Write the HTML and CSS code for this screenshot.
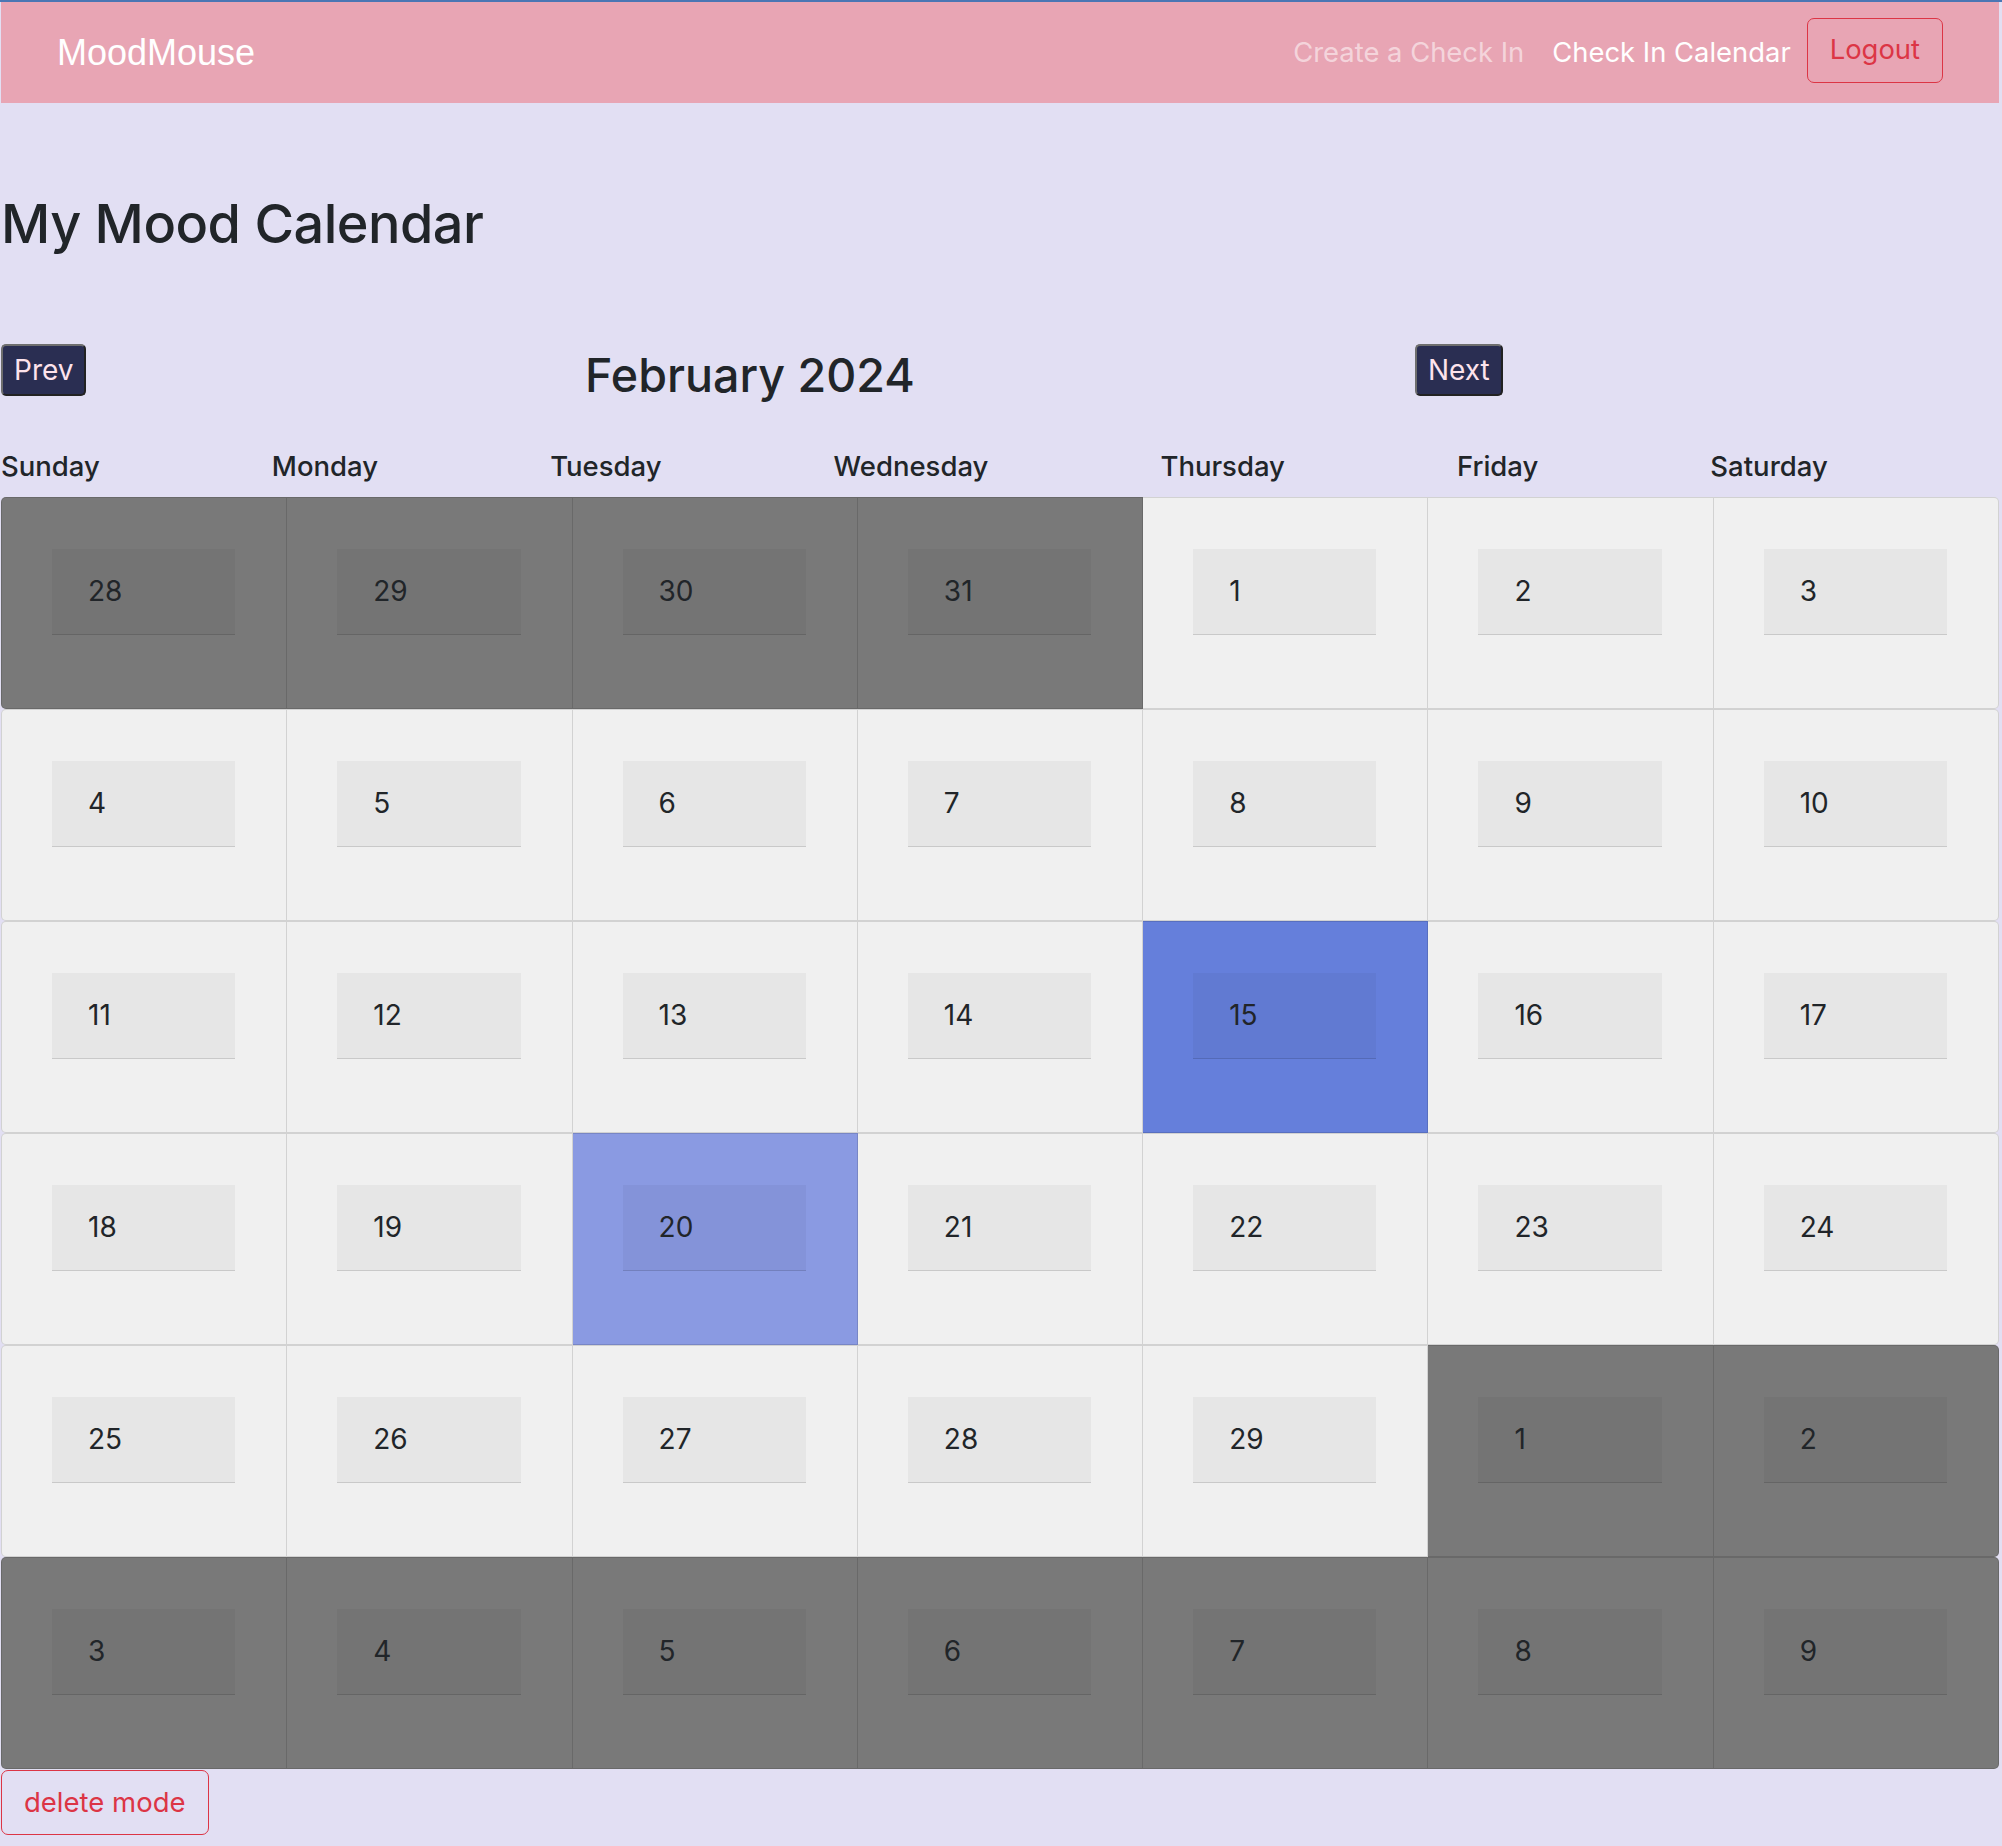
FILE: index.html
```html
<!DOCTYPE html>
<html lang="en">
<head>
<meta charset="utf-8">
<title>MoodMouse</title>
<link rel="stylesheet" href="styles.css">
</head>
<body>
<nav class="navbar">
  <a class="brand" href="#">MoodMouse</a>
  <div class="nav-right">
    <a class="nav-link" href="#">Create a Check In</a>
    <a class="nav-link active" href="#">Check In Calendar</a>
    <button class="btn-logout">Logout</button>
  </div>
</nav>
<main class="page">
  <h1 class="title">My Mood Calendar</h1>
  <div class="month-bar">
    <div class="col-prev"><button class="nav-btn">Prev</button></div>
    <h2 class="month">February 2024</h2>
    <div class="col-next"><button class="nav-btn">Next</button></div>
  </div>
  <div class="weekdays">
    <span>Sunday</span><span>Monday</span><span>Tuesday</span><span>Wednesday</span><span>Thursday</span><span>Friday</span><span>Saturday</span>
  </div>
  <div class="calendar">
    <div class="week">
      <div class="cell out"><div class="day">28</div></div>
      <div class="cell out"><div class="day">29</div></div>
      <div class="cell out"><div class="day">30</div></div>
      <div class="cell out"><div class="day">31</div></div>
      <div class="cell"><div class="day">1</div></div>
      <div class="cell"><div class="day">2</div></div>
      <div class="cell"><div class="day">3</div></div>
    </div>
    <div class="week">
      <div class="cell"><div class="day">4</div></div>
      <div class="cell"><div class="day">5</div></div>
      <div class="cell"><div class="day">6</div></div>
      <div class="cell"><div class="day">7</div></div>
      <div class="cell"><div class="day">8</div></div>
      <div class="cell"><div class="day">9</div></div>
      <div class="cell"><div class="day">10</div></div>
    </div>
    <div class="week">
      <div class="cell"><div class="day">11</div></div>
      <div class="cell"><div class="day">12</div></div>
      <div class="cell"><div class="day">13</div></div>
      <div class="cell"><div class="day">14</div></div>
      <div class="cell mood-strong"><div class="day">15</div></div>
      <div class="cell"><div class="day">16</div></div>
      <div class="cell"><div class="day">17</div></div>
    </div>
    <div class="week">
      <div class="cell"><div class="day">18</div></div>
      <div class="cell"><div class="day">19</div></div>
      <div class="cell mood-soft"><div class="day">20</div></div>
      <div class="cell"><div class="day">21</div></div>
      <div class="cell"><div class="day">22</div></div>
      <div class="cell"><div class="day">23</div></div>
      <div class="cell"><div class="day">24</div></div>
    </div>
    <div class="week">
      <div class="cell"><div class="day">25</div></div>
      <div class="cell"><div class="day">26</div></div>
      <div class="cell"><div class="day">27</div></div>
      <div class="cell"><div class="day">28</div></div>
      <div class="cell"><div class="day">29</div></div>
      <div class="cell out"><div class="day">1</div></div>
      <div class="cell out"><div class="day">2</div></div>
    </div>
    <div class="week">
      <div class="cell out"><div class="day">3</div></div>
      <div class="cell out"><div class="day">4</div></div>
      <div class="cell out"><div class="day">5</div></div>
      <div class="cell out"><div class="day">6</div></div>
      <div class="cell out"><div class="day">7</div></div>
      <div class="cell out"><div class="day">8</div></div>
      <div class="cell out"><div class="day">9</div></div>
    </div>
  </div>
  <button class="btn-delete">delete mode</button>
</main>
</body>
</html>
```
FILE: styles.css
```css
html, body {
  margin: 0;
  padding: 0;
}
body {
  background: #e2dff3;
  border-top: 2px solid #4a76b4;
  padding: 0 3px 0 1px;
  font-family: Inter, "Noto Sans", sans-serif;
  color: #212529;
  font-size: 28px;
  line-height: 1.5;
  min-height: 1844px;
  box-sizing: border-box;
}
.navbar {
  display: flex;
  align-items: center;
  justify-content: space-between;
  background: #e8a5b4;
  height: 101px;
  padding: 0 56px;
}
.brand {
  font-family: "Liberation Sans", Arial, sans-serif;
  font-size: 36px;
  color: #ffffff;
  text-decoration: none;
  line-height: 1.5;
}
.nav-right {
  display: flex;
  align-items: center;
}
.nav-link {
  color: rgba(255, 255, 255, 0.55);
  text-decoration: none;
  padding: 0 14px;
  font-size: 27.4px;
}
.nav-link.active {
  color: #ffffff;
}
.btn-logout {
  margin: -5px 0 0 2px;
  font-family: Inter, sans-serif;
  font-size: 27.4px;
  line-height: 1.5;
  color: #dc3545;
  background: transparent;
  border: 1px solid #dc3545;
  border-radius: 7px;
  padding: 10px 22px;
  height: 65px;
}
.page {
  display: flex;
  flex-direction: column;
  align-items: stretch;
}
.title {
  margin: 84px 0 0;
  font-size: 54px;
  font-weight: 500;
  line-height: 1.2;
  letter-spacing: -0.5px;
  padding-top: 5px;
  height: 67px;
}
.month-bar {
  display: grid;
  grid-template-columns: 584px 830px 1fr;
  margin-top: 85px;
  height: 100px;
}
.nav-btn {
  font-family: Inter, sans-serif;
  font-size: 28px;
  line-height: 1.5;
  color: #fde3ec;
  background: #2a2e52;
  border: 2px solid;
  border-color: #6e6e6e #222222 #222222 #6e6e6e;
  border-radius: 5px;
  height: 52px;
  padding: 0 11px;
}
.month {
  margin: 0;
  font-size: 46.6px;
  font-weight: 500;
  line-height: 1.2;
  padding-top: 4px;
}
.weekdays {
  display: flex;
  gap: 172px;
  height: 53px;
  padding-bottom: 8px;
  box-sizing: border-box;
  align-items: center;
}
.weekdays span {
  font-size: 27.5px;
  font-weight: 500;
}
.calendar {
  display: flex;
  flex-direction: column;
}
.week {
  display: flex;
}
.cell {
  flex: 1 1 0;
  background: #f0f0f0;
  border: 1px solid rgba(0, 0, 0, 0.125);
  border-left: 0;
  height: 212px;
  box-sizing: border-box;
  padding: 51px 51px 0 50px;
}
.cell:first-child {
  border-left: 1px solid rgba(0, 0, 0, 0.125);
  border-radius: 5px 0 0 5px;
}
.cell:last-child {
  border-radius: 0 5px 5px 0;
}
.cell.out {
  background: #797979;
}
.cell.mood-strong {
  background: #657fdb;
}
.cell.mood-soft {
  background: #8a9ae2;
}
.day {
  height: 86px;
  box-sizing: border-box;
  line-height: 85px;
  padding: 0 36px;
  background: rgba(0, 0, 0, 0.04);
  border-bottom: 1px solid rgba(0, 0, 0, 0.125);
  font-size: 28px;
}
.btn-delete {
  align-self: flex-start;
  font-family: Inter, sans-serif;
  font-size: 27.5px;
  line-height: 1.5;
  color: #dc3545;
  background: transparent;
  border: 1px solid #dc3545;
  border-radius: 7px;
  padding: 10px 22px;
  height: 65px;
  margin-top: 1px;
}
```
